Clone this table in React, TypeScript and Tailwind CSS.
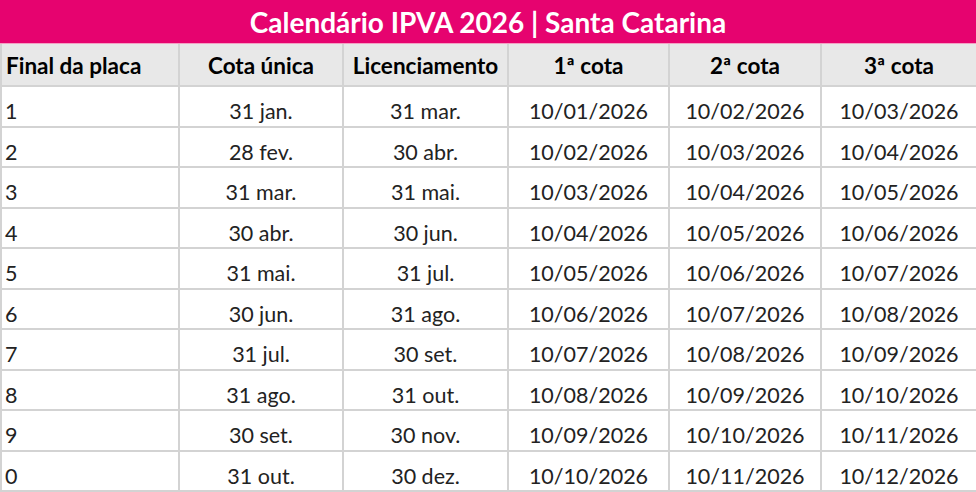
const rows: string[][] = [
  ["1", "31 jan.", "31 mar.", "10/01/2026", "10/02/2026", "10/03/2026"],
  ["2", "28 fev.", "30 abr.", "10/02/2026", "10/03/2026", "10/04/2026"],
  ["3", "31 mar.", "31 mai.", "10/03/2026", "10/04/2026", "10/05/2026"],
  ["4", "30 abr.", "30 jun.", "10/04/2026", "10/05/2026", "10/06/2026"],
  ["5", "31 mai.", "31 jul.", "10/05/2026", "10/06/2026", "10/07/2026"],
  ["6", "30 jun.", "31 ago.", "10/06/2026", "10/07/2026", "10/08/2026"],
  ["7", "31 jul.", "30 set.", "10/07/2026", "10/08/2026", "10/09/2026"],
  ["8", "31 ago.", "31 out.", "10/08/2026", "10/09/2026", "10/10/2026"],
  ["9", "30 set.", "30 nov.", "10/09/2026", "10/10/2026", "10/11/2026"],
  ["0", "31 out.", "30 dez.", "10/10/2026", "10/11/2026", "10/12/2026"],
];

const headers = ["Final da placa", "Cota única", "Licenciamento", "1ª cota", "2ª cota", "3ª cota"];

const cols = "grid grid-cols-[178px_164px_165px_161px_152px_1fr]";

export default function App() {
  return (
    <div
      className="w-[976px] h-[492px] overflow-hidden bg-white"
      style={{ fontFamily: "Lato, 'Open Sans', sans-serif" }}
    >
      {/* Title bar */}
      <div className="h-[44px] bg-[#e6036f] flex items-center justify-center border-b border-[#f3a0c4]">
        <h1 className="text-white font-bold text-[28px] leading-none">
          Calendário IPVA 2026 | Santa Catarina
        </h1>
      </div>

      {/* Header row */}
      <div className={`${cols} h-[43px] bg-[#e8e8e8] border-l-2 border-[#d3d3d3]`}>
        {headers.map((h, i) => (
          <div
            key={h}
            className={`flex items-center border-b-2 border-[#d3d3d3] font-bold text-[22.5px] leading-[26px] text-black pt-[2px] ${
              i === 0 ? "justify-start pl-[4px]" : "justify-center"
            } ${i < 5 ? "border-r-2" : ""}`}
          >
            {h}
          </div>
        ))}
      </div>

      {/* Data rows */}
      {rows.map((r) => (
        <div key={r[0]} className={`${cols} h-[40.5px] border-l-2 border-[#d3d3d3]`}>
          {r.map((c, i) => (
            <div
              key={i}
              className={`flex items-center border-b-2 border-[#d3d3d3] text-[21.5px] leading-[24px] text-[#222] pt-[10px] ${
                i === 0 ? "justify-start pl-[3px]" : "justify-center"
              } ${i < 5 ? "border-r-2" : ""}`}
            >
              {c}
            </div>
          ))}
        </div>
      ))}
    </div>
  );
}
